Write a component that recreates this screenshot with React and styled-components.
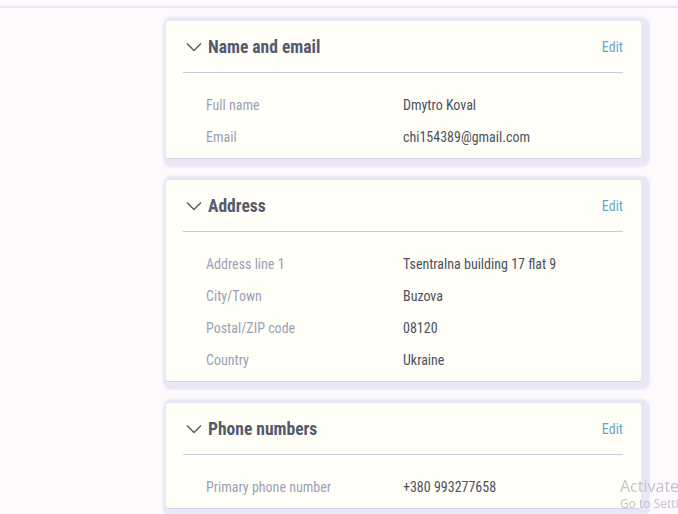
import { createGlobalStyle, styled } from "styled-components";

const GlobalStyle = createGlobalStyle`
	html, body {
		margin: 0;
		padding: 0;
		background: #fdf9fd;
		font-family: Roboto, "Liberation Sans", sans-serif;
		font-stretch: condensed;
	}
`;

const Page = styled.div`
	min-height: 514px;
	border-top: 6px solid #fdf9fd;
	position: relative;
	overflow: hidden;
	&::before {
		content: "";
		display: block;
		height: 2px;
		background: #efe6f0;
	}
`;

const Column = styled.main`
	display: flex;
	flex-direction: column;
	gap: 21px;
	width: 475px;
	padding: 13px 0 20px 166px;
`;

const Card = styled.section`
	background: #fffff7;
	border-bottom: 1px solid #d6d2e6;
	border-radius: 3px;
	padding: 0 18px 5px 17px;
	box-shadow: 3px 2px 2px 6px #e9e7f6;
`;

const Header = styled.header`
	height: 51px;
	display: flex;
	align-items: center;
	border-bottom: 1px solid #ccc8de;
`;

const Chevron = styled.svg`
	width: 16px;
	height: 10px;
	margin: 0 6px 0 3px;
	flex-shrink: 0;
`;

const Title = styled.h2`
	flex: 1;
	margin: 0;
	font-size: 17.5px;
	font-weight: 700;
	color: #545a6e;
`;

const EditLink = styled.a`
	font-size: 14px;
	color: #5fa7cf;
	cursor: pointer;
`;

const Body = styled.dl`
	margin: 0;
	padding: 16px 0 0 23px;
`;

const Row = styled.div`
	display: grid;
	grid-template-columns: 197px auto;
	align-items: center;
	height: 32px;
	font-size: 14px;
	dt {
		color: #9a9fb7;
	}
	dd {
		margin: 0;
		color: #4b505f;
	}
`;

const Watermark = styled.div`
	position: fixed;
	left: 620px;
	top: 476px;
	font-family: "Open Sans", "Liberation Sans", sans-serif;
	font-stretch: normal;
	color: #c3c3c8;
	white-space: nowrap;
	p {
		margin: 0;
		font-size: 16px;
		line-height: 20px;
	}
	small {
		display: block;
		font-size: 12px;
		line-height: 16px;
	}
`;

const sections = [
	{
		title: "Name and email",
		rows: [
			["Full name", "Dmytro Koval"],
			["Email", "chi154389@gmail.com"],
		],
	},
	{
		title: "Address",
		rows: [
			["Address line 1", "Tsentralna building 17 flat 9"],
			["City/Town", "Buzova"],
			["Postal/ZIP code", "08120"],
			["Country", "Ukraine"],
		],
	},
	{
		title: "Phone numbers",
		rows: [["Primary phone number", "+380 993277658"]],
	},
];

function Section({ title, rows }) {
	return (
		<Card>
			<Header>
				<Chevron viewBox="0 0 16 10">
					<polyline
						points="1,1.5 8,8.5 15,1.5"
						fill="none"
						stroke="#555b70"
						strokeWidth="1.4"
					/>
				</Chevron>
				<Title>{title}</Title>
				<EditLink>Edit</EditLink>
			</Header>
			<Body>
				{rows.map(([label, value]) => (
					<Row key={label}>
						<dt>{label}</dt>
						<dd>{value}</dd>
					</Row>
				))}
			</Body>
		</Card>
	);
}

export default function App() {
	return (
		<Page>
			<GlobalStyle />
			<Column>
				{sections.map((s) => (
					<Section key={s.title} {...s} />
				))}
			</Column>
			<Watermark>
				<p>Activate Windows</p>
				<small>Go to Settings to activate Windows.</small>
			</Watermark>
		</Page>
	);
}
